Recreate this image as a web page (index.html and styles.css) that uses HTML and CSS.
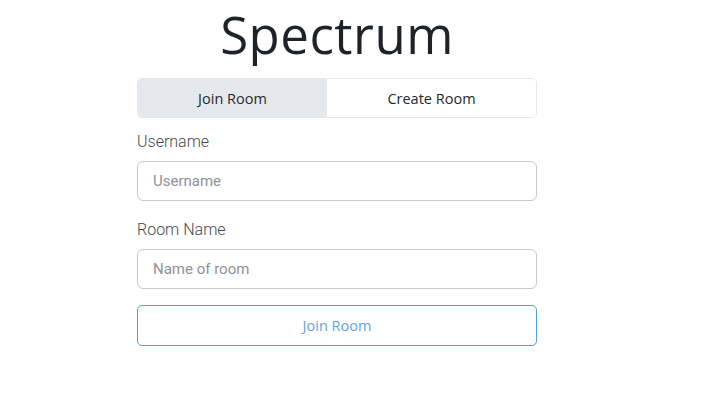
FILE: index.html
```html
<!DOCTYPE html>
<html lang="en">
<head>
<meta charset="utf-8">
<title>Spectrum</title>
<link rel="stylesheet" href="styles.css">
</head>
<body>
<main class="panel">
  <h1 class="title">Spectrum</h1>
  <div class="tabs">
    <button class="tab tab-active">Join Room</button>
    <button class="tab">Create Room</button>
  </div>
  <form class="form">
    <label class="field field-first">
      <span class="label">Username</span>
      <input class="input" type="text" placeholder="Username">
    </label>
    <label class="field">
      <span class="label">Room Name</span>
      <input class="input" type="text" placeholder="Name of room">
    </label>
    <button class="submit" type="button">Join Room</button>
  </form>
</main>
</body>
</html>
```
FILE: styles.css
```css
html, body {
  margin: 0;
  padding: 0;
  background: #ffffff;
}
body {
  font-family: "Open Sans", "Liberation Sans", sans-serif;
  color: #212529;
}
.panel {
  width: 400px;
  margin-left: 137px;
  display: flex;
  flex-direction: column;
}
.title {
  margin: 0;
  height: 70px;
  line-height: 68px;
  text-align: center;
  font-size: 51px;
  font-weight: 400;
  color: #1f2328;
  letter-spacing: 0.5px;
}
.tabs {
  margin-top: 8px;
  display: flex;
  height: 40px;
  box-sizing: border-box;
  border: 1px solid #e4e6ea;
  border-radius: 5px;
  overflow: hidden;
}
.tab {
  border: 0;
  background: #ffffff;
  font-family: "Open Sans", sans-serif;
  font-size: 14.5px;
  color: #25282c;
  padding: 0;
  cursor: pointer;
}
.tab-active {
  width: 189px;
  background: #e5e8ec;
}
.tab:not(.tab-active) {
  flex: 1;
}
.form {
  display: flex;
  flex-direction: column;
  gap: 16px;
  margin-top: 13px;
}
.field {
  display: flex;
  flex-direction: column;
  gap: 8px;
}
.field-first {
  margin-bottom: 2px;
}
.label {
  font-family: Roboto, "Liberation Sans", sans-serif;
  font-size: 16px;
  font-weight: 300;
  color: #45484d;
  line-height: 22px;
  height: 22px;
}
.input {
  margin: 0;
  height: 40px;
  box-sizing: border-box;
  border: 1px solid #c6c8cc;
  border-radius: 6px;
  padding: 0 15px;
  font-family: Roboto, "Liberation Sans", sans-serif;
  font-size: 15px;
  color: #333;
  outline: none;
}
.input::placeholder {
  color: #8e9196;
}
.submit {
  margin: 0;
  height: 41px;
  box-sizing: border-box;
  border: 1px solid #5b9bd5;
  border-radius: 5px;
  background: #ffffff;
  color: #64a2e3;
  font-family: "Open Sans", sans-serif;
  font-size: 14.5px;
  cursor: pointer;
}
```
